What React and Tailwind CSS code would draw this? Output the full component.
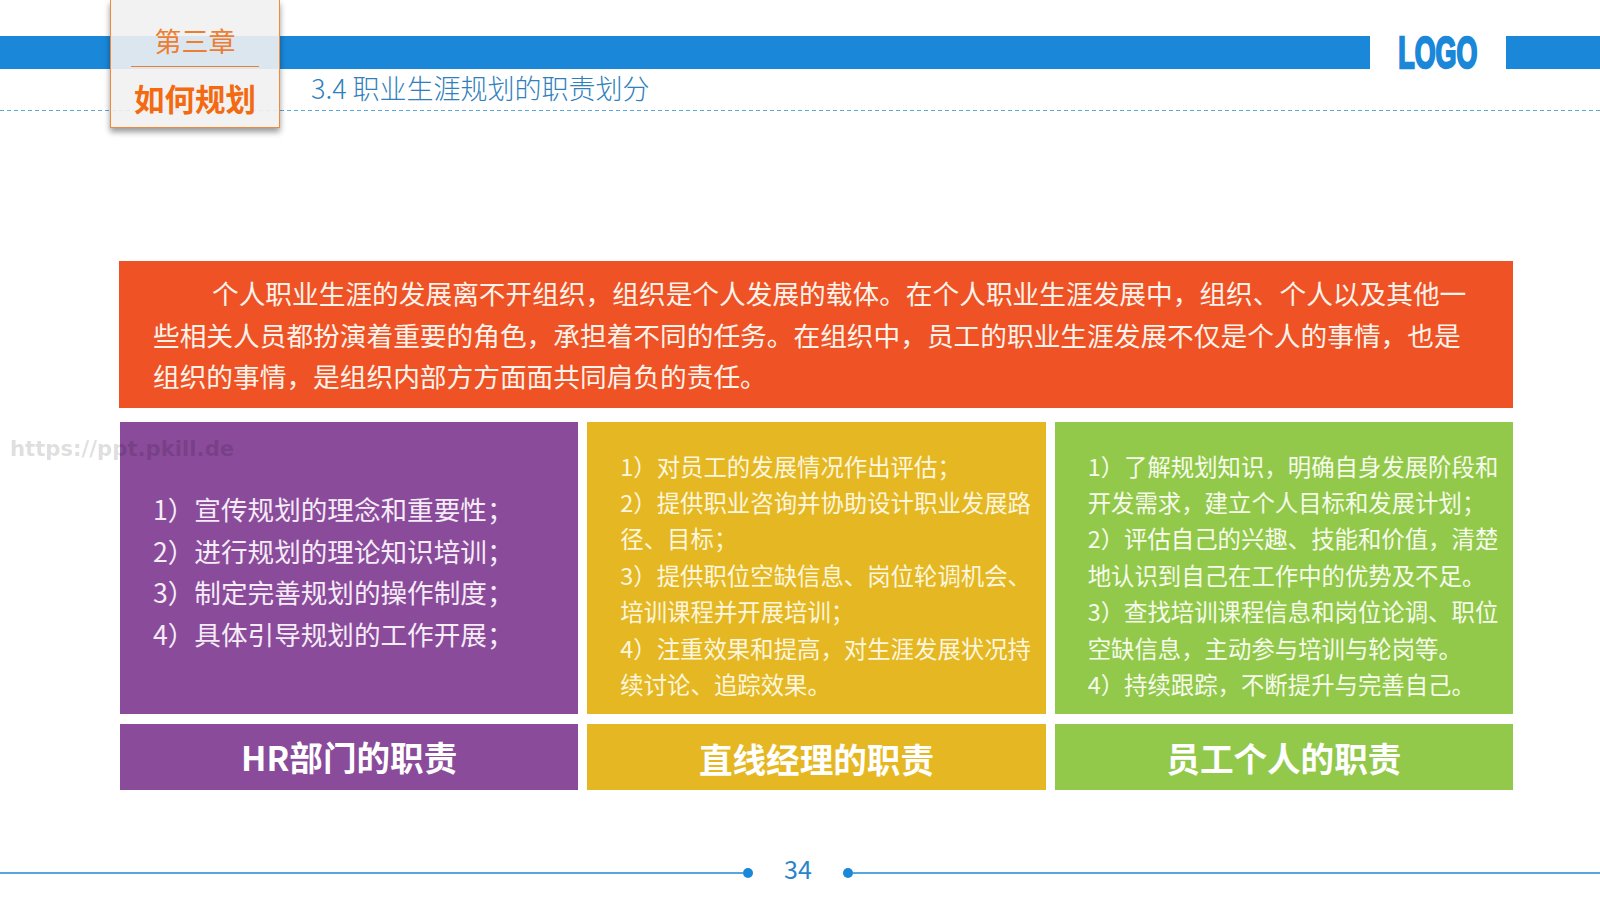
const cjk = "font-['Noto_Sans_CJK_SC','Liberation_Sans',sans-serif]";

const intro = [
  "个人职业生涯的发展离不开组织，组织是个人发展的载体。在个人职业生涯发展中，组织、个人以及其他一",
  "些相关人员都扮演着重要的角色，承担着不同的任务。在组织中，员工的职业生涯发展不仅是个人的事情，也是",
  "组织的事情，是组织内部方方面面共同肩负的责任。",
];
const hrLines = ["1）宣传规划的理念和重要性；", "2）进行规划的理论知识培训；", "3）制定完善规划的操作制度；", "4）具体引导规划的工作开展；"];
const managerLines = [
  "1）对员工的发展情况作出评估；",
  "2）提供职业咨询并协助设计职业发展路",
  "径、目标；",
  "3）提供职位空缺信息、岗位轮调机会、",
  "培训课程并开展培训；",
  "4）注重效果和提高，对生涯发展状况持",
  "续讨论、追踪效果。",
];
const staffLines = [
  "1）了解规划知识，明确自身发展阶段和",
  "开发需求，建立个人目标和发展计划；",
  "2）评估自己的兴趣、技能和价值，清楚",
  "地认识到自己在工作中的优势及不足。",
  "3）查找培训课程信息和岗位论调、职位",
  "空缺信息，主动参与培训与轮岗等。",
  "4）持续跟踪，不断提升与完善自己。",
];

const Lines = ({ items }) => items.map((t) => <div key={t} className="whitespace-nowrap">{t}</div>);

export default function App() {
  return (
    <div className={`relative w-[1600px] h-[900px] overflow-hidden bg-white flex flex-col ${cjk}`}>
      {/* Header */}
      <div className="flex items-start pt-[36px] h-[110px] shrink-0">
        <div className="h-[33px] w-[1370px] bg-[#1a87d9]" />
        <div className="w-[136px] h-[33px] flex items-center justify-center">
          <span className="text-[#1a87d9] text-[44px] font-bold leading-none scale-x-[0.61] [-webkit-text-stroke:2.5px_#1a87d9] font-['Liberation_Sans',sans-serif]">LOGO</span>
        </div>
        <div className="h-[33px] flex-1 bg-[#1a87d9]" />
      </div>
      <div className="h-px shrink-0 bg-[repeating-linear-gradient(90deg,#5aa8dc_0,#5aa8dc_4px,transparent_4px,transparent_7px)]" />

      {/* Chapter tab */}
      <div className="absolute left-[110px] top-0 w-[170px] h-[128px] bg-[#f1f1f1]/90 border-x border-b border-[#ee8a3c] shadow-[0_4px_6px_rgba(0,0,0,0.4)] flex flex-col items-center">
        <div className="mt-[22px] text-[27px] leading-[38px] text-[#ed7d31]">第三章</div>
        <div className="mt-[6px] w-[128px] h-px bg-[#ed7d31]" />
        <div className="mt-[9px] text-[30.5px] leading-[44px] font-bold text-[#f36a10]">如何规划</div>
      </div>

      <div className="absolute left-[311px] top-[70px] text-[27px] leading-[36px] font-light text-[#2f80bd] whitespace-nowrap">3.4 职业生涯规划的职责划分</div>

      {/* Content */}
      <div className="ml-[119px] w-[1394px] mt-[150px] flex flex-col">
        <div className="h-[147px] bg-[#ee5225] text-[#fdf3ea] text-[26.7px] leading-[41.5px] pl-[34px] pt-[11px]">
          <div className="whitespace-nowrap pl-[59px]">{intro[0]}</div>
          <div className="whitespace-nowrap">{intro[1]}</div>
          <div className="whitespace-nowrap">{intro[2]}</div>
        </div>

        <div className="grid grid-cols-3 gap-x-[9px] pl-px mt-[14px]">
          <div className="h-[292px] bg-[#8a4b9b] text-[#f5ecf7] text-[26.6px] leading-[41.5px] pl-[33px] pt-[66px]">
            <Lines items={hrLines} />
          </div>
          <div className="h-[292px] bg-[#e5b823] text-[#fdf6df] text-[23.4px] leading-[36.4px] pl-[33px] pt-[25.5px]">
            <Lines items={managerLines} />
          </div>
          <div className="h-[292px] bg-[#92c94a] text-[#f6fbec] text-[23.4px] leading-[36.4px] pl-[33px] pt-[25.5px]">
            <Lines items={staffLines} />
          </div>
          <div className="mt-[10px] h-[66px] bg-[#8a4b9b] text-white text-[33.6px] font-bold flex items-center justify-center">HR部门的职责</div>
          <div className="mt-[10px] h-[66px] bg-[#e5b823] text-white text-[33.6px] font-bold flex items-center justify-center pt-[5px]">直线经理的职责</div>
          <div className="mt-[10px] h-[66px] bg-[#92c94a] text-white text-[33.6px] font-bold flex items-center justify-center pt-[2px]">员工个人的职责</div>
        </div>
      </div>

      {/* Footer */}
      <div className="mt-[64px] flex items-center h-[28px]">
        <div className="h-[2px] w-[743px] bg-[#58a6dd] translate-y-[5px]" />
        <div className="w-[10px] h-[10px] rounded-full bg-[#1a87d9] translate-y-[5px]" />
        <div className="w-[90px] text-center text-[25px] leading-[28px] text-[#2a84c8]">34</div>
        <div className="w-[10px] h-[10px] rounded-full bg-[#1a87d9] translate-y-[5px]" />
        <div className="h-[2px] flex-1 bg-[#58a6dd] translate-y-[5px]" />
      </div>

      {/* Watermark */}
      <div className="absolute left-[10px] top-[431px] text-[21.2px] leading-[36px] font-bold text-black/[0.14] whitespace-nowrap font-['DejaVu_Sans',sans-serif]">https://ppt.pkill.de</div>
    </div>
  );
}
